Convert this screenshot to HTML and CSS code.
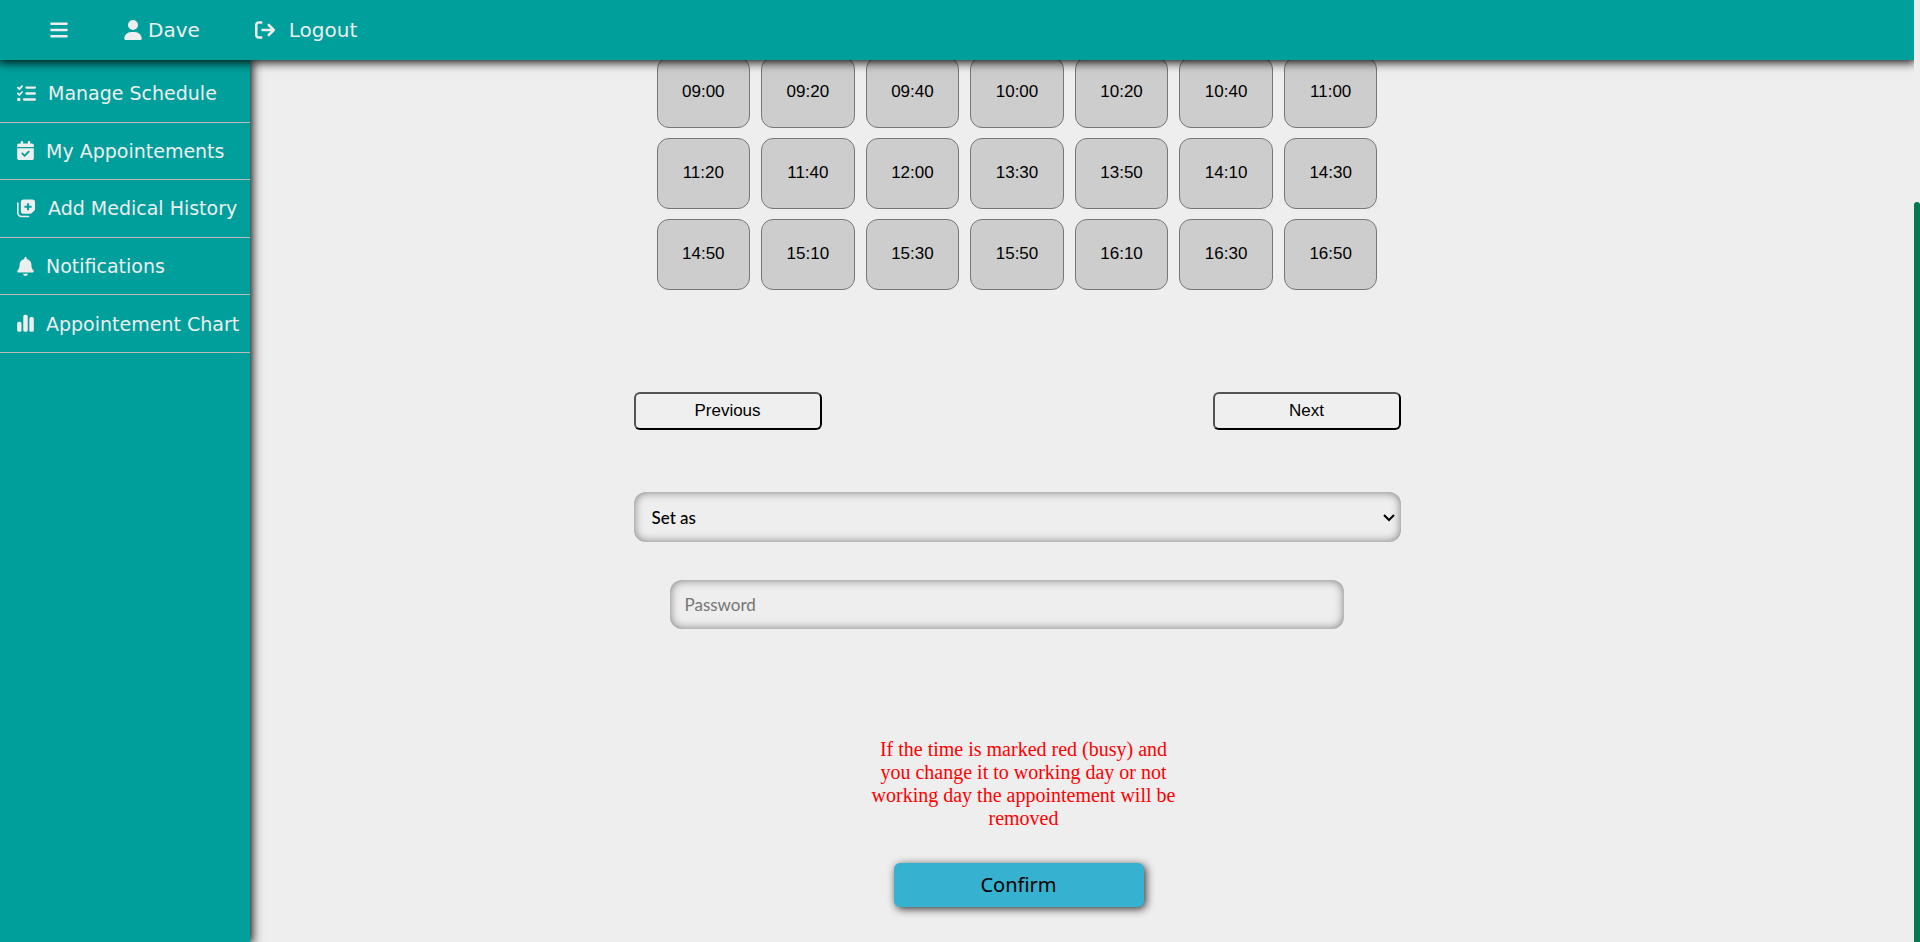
FILE: index.html
```html
<!DOCTYPE html>
<html lang="en">
<head>
<meta charset="utf-8">
<title>Manage Schedule</title>
<link rel="stylesheet" href="styles.css">
</head>
<body>
<header class="topbar">
  <button class="menu-toggle" type="button" aria-label="Toggle menu">
    <svg class="icon icon-narrow" viewBox="0 0 448 512"><path d="M0 96C0 78.300 14.300 64 32 64H416c17.700 0 32 14.300 32 32s-14.300 32-32 32H32C14.300 128 0 113.700 0 96zM0 256c0-17.700 14.300-32 32-32H416c17.700 0 32 14.300 32 32s-14.300 32-32 32H32c-17.700 0-32-14.300-32-32zM448 416c0 17.700-14.300 32-32 32H32c-17.700 0-32-14.300-32-32s14.300-32 32-32H416c17.700 0 32 14.300 32 32z"/></svg>
  </button>
  <a class="topbar-link user-link" href="#"><svg class="icon icon-narrow" viewBox="0 0 448 512"><path d="M224 256A128 128 0 1 0 224 0a128 128 0 1 0 0 256zm-45.700 48C79.800 304 0 383.800 0 482.300C0 498.700 13.300 512 29.700 512H418.300c16.400 0 29.700-13.300 29.700-29.700C448 383.800 368.200 304 269.700 304H178.300z"/></svg>Dave</a>
  <a class="topbar-link logout-link" href="#"><svg class="icon" viewBox="0 0 512 512"><path d="M502.600 278.600c12.500-12.500 12.500-32.800 0-45.300l-128-128c-12.500-12.500-32.800-12.500-45.300 0s-12.500 32.800 0 45.300L402.700 224 192 224c-17.700 0-32 14.300-32 32s14.300 32 32 32l210.700 0-73.400 73.400c-12.500 12.500-12.500 32.800 0 45.300s32.800 12.500 45.300 0l128-128zM160 96c17.700 0 32-14.300 32-32s-14.300-32-32-32L96 32C43 32 0 75 0 128L0 384c0 53 43 96 96 96l64 0c17.700 0 32-14.300 32-32s-14.300-32-32-32l-64 0c-17.700 0-32-14.300-32-32l0-256c0-17.700 14.300-32 32-32l64 0z"/></svg>Logout</a>
</header>
<div class="layout">
  <nav class="sidebar">
    <a class="side-link" href="#"><svg class="icon" viewBox="0 0 512 512"><path d="M152.100 38.200c9.900 8.900 10.700 24 1.800 33.900l-72 80c-4.400 4.900-10.600 7.800-17.200 7.900s-12.900-2.400-17.600-7L7 113C-2.300 103.600-2.300 88.400 7 79s24.600-9.400 33.900 0l22.100 22.100 55.100-61.200c8.900-9.900 24-10.700 33.900-1.800zm0 160c9.900 8.900 10.700 24 1.800 33.900l-72 80c-4.400 4.900-10.600 7.800-17.200 7.900s-12.900-2.400-17.600-7L7 273c-9.400-9.400-9.400-24.600 0-33.900s24.600-9.400 33.900 0l22.100 22.100 55.100-61.200c8.900-9.900 24-10.700 33.900-1.800zM224 96c0-17.700 14.300-32 32-32H480c17.700 0 32 14.300 32 32s-14.300 32-32 32H256c-17.700 0-32-14.300-32-32zm0 160c0-17.700 14.300-32 32-32H480c17.700 0 32 14.300 32 32s-14.300 32-32 32H256c-17.700 0-32-14.300-32-32zM160 416c0-17.700 14.300-32 32-32H480c17.700 0 32 14.300 32 32s-14.300 32-32 32H192c-17.700 0-32-14.300-32-32zM48 368a48 48 0 1 1 0 96 48 48 0 1 1 0-96z"/></svg>Manage Schedule</a>
    <a class="side-link" href="#"><svg class="icon icon-narrow" viewBox="0 0 448 512"><path d="M128 0c17.700 0 32 14.300 32 32V64H288V32c0-17.700 14.300-32 32-32s32 14.300 32 32V64h48c26.500 0 48 21.500 48 48v48H0V112C0 85.500 21.500 64 48 64H96V32c0-17.700 14.300-32 32-32zM0 192H448V464c0 26.500-21.500 48-48 48H48c-26.500 0-48-21.500-48-48V192zM329 305c9.400-9.400 9.400-24.600 0-33.900s-24.600-9.400-33.900 0l-95 95-47-47c-9.400-9.400-24.600-9.400-33.900 0s-9.400 24.600 0 33.900l64 64c9.400 9.400 24.600 9.400 33.900 0L329 305z"/></svg>My Appointements</a>
    <a class="side-link" href="#"><svg class="icon" viewBox="0 0 512 512"><path fill-rule="evenodd" d="M180 16H410a76 76 0 0 1 76 76V270C486 290 478 302 466 314L398 380C386 392 372 400 354 400H180a76 76 0 0 1-76-76V92a76 76 0 0 1 76-76zM272 112v70H202v52h70v70h52V234h70V182H324V112z"/><path d="M22 112V368a104 104 0 0 0 104 104H310" fill="none" stroke="currentColor" stroke-width="44" stroke-linecap="round"/></svg>Add Medical History</a>
    <a class="side-link" href="#"><svg class="icon icon-narrow" viewBox="0 0 448 512"><path d="M224 0c-17.700 0-32 14.300-32 32V51.200C119 66 64 130.600 64 208v18.800c0 47-17.300 92.400-48.500 127.600l-7.400 8.300c-8.400 9.400-10.400 22.900-5.300 34.400S19.400 416 32 416H416c12.600 0 24-7.400 29.200-18.900s3.100-25-5.300-34.400l-7.400-8.300C401.300 319.200 384 273.900 384 226.800V208c0-77.400-55-142-128-156.800V32c0-17.700-14.300-32-32-32zm45.300 493.300c12-12 18.700-28.300 18.700-45.300H160c0 17 6.700 33.300 18.700 45.300s28.300 18.700 45.300 18.700s33.300-6.700 45.300-18.700z"/></svg>Notifications</a>
    <a class="side-link" href="#"><svg class="icon icon-narrow" viewBox="0 0 448 512"><path d="M164 64a44 44 0 0 1 44-44h32a44 44 0 0 1 44 44V436a44 44 0 0 1-44 44H208a44 44 0 0 1-44-44zM0 256a44 44 0 0 1 44-44H72a44 44 0 0 1 44 44V436a44 44 0 0 1-44 44H44a44 44 0 0 1-44-44zM328 128a44 44 0 0 1 44-44h32a44 44 0 0 1 44 44V436a44 44 0 0 1-44 44H372a44 44 0 0 1-44-44z"/></svg>Appointement Chart</a>
  </nav>
  <main class="content">
    <form class="schedule">
      <div class="slots">
        <button class="slot" type="button">09:00</button>
        <button class="slot" type="button">09:20</button>
        <button class="slot" type="button">09:40</button>
        <button class="slot" type="button">10:00</button>
        <button class="slot" type="button">10:20</button>
        <button class="slot" type="button">10:40</button>
        <button class="slot" type="button">11:00</button>
        <button class="slot" type="button">11:20</button>
        <button class="slot" type="button">11:40</button>
        <button class="slot" type="button">12:00</button>
        <button class="slot" type="button">13:30</button>
        <button class="slot" type="button">13:50</button>
        <button class="slot" type="button">14:10</button>
        <button class="slot" type="button">14:30</button>
        <button class="slot" type="button">14:50</button>
        <button class="slot" type="button">15:10</button>
        <button class="slot" type="button">15:30</button>
        <button class="slot" type="button">15:50</button>
        <button class="slot" type="button">16:10</button>
        <button class="slot" type="button">16:30</button>
        <button class="slot" type="button">16:50</button>
      </div>
      <div class="pager">
        <button class="pager-button" type="button">Previous</button>
        <button class="pager-button" type="button">Next</button>
      </div>
      <div class="status-wrap">
        <select class="field status" aria-label="Set as">
          <option>Set as</option>
        </select>
        <svg class="chevron" viewBox="0 0 12 8"><path d="M1 1l5 5 5-5" fill="none" stroke="#000" stroke-width="2"/></svg>
      </div>
      <input class="field password" type="password" placeholder="Password" aria-label="Password">
      <p class="warning">If the time is marked red (busy) and you change it to working day or not working day the appointement will be removed</p>
      <button class="confirm" type="submit">Confirm</button>
    </form>
  </main>
</div>
<div class="scroll-track"><div class="scroll-thumb"></div></div>
</body>
</html>
```
FILE: styles.css
```css
* {
  box-sizing: border-box;
}

body {
  margin: 0;
  height: 100vh;
  display: grid;
  grid-template-columns: 1fr 6px;
  grid-template-rows: 60px 1fr;
  overflow: hidden;
  background: #eee;
}

.topbar {
  z-index: 2;
  display: flex;
  align-items: center;
  padding-left: 50px;
  background: #009f9b;
  box-shadow: 0 0 10px 2px #000;
  clip-path: inset(0 0 -20px 0);
  color: #eee;
}

.icon {
  width: 19px;
  height: 19px;
  flex: none;
  fill: currentColor;
}

.icon-narrow {
  width: 17px;
}

.menu-toggle {
  display: flex;
  padding: 0;
  border: 0;
  background: none;
  color: inherit;
}

.topbar-link,
.side-link {
  display: flex;
  align-items: center;
  font-family: Tahoma, "DejaVu Sans", sans-serif;
  color: #eee;
  text-decoration: none;
}

.topbar-link {
  font-size: 20px;
}

.side-link {
  font-size: 19px;
}

.topbar .icon {
  width: 20px;
  height: 20px;
}

.topbar .icon-narrow {
  width: 18px;
}

.user-link {
  gap: 6px;
  margin-left: 56px;
}

.logout-link {
  gap: 14px;
  margin-left: 55px;
}

.layout {
  display: grid;
  grid-template-columns: 250px 1fr;
  min-height: 0;
}

.sidebar {
  z-index: 1;
  padding-top: 5px;
  display: grid;
  grid-template-rows: repeat(5, calc(288px / 5));
  background: #009f9b;
  box-shadow: 0 0 10px 2px #000;
}

.side-link {
  gap: 12px;
  padding: 0 0 0 17px;
  border-bottom: 1px solid #bbb;
  white-space: nowrap;
}

.content {
  min-height: 0;
  padding-right: 130px;
}

.schedule {
  width: 50%;
  margin: 0 auto;
  display: flex;
  flex-direction: column;
}

.slots {
  display: grid;
  grid-template-columns: repeat(7, 1fr);
  grid-auto-rows: 71px;
  gap: 10px 11px;
  width: 94%;
  margin: -3px auto 0;
}

.slot {
  padding: 0 0 1px;
  border: 1px solid #777;
  border-radius: 12px;
  background: #cdcdcd;
  color: #000;
  font: 17px "Liberation Sans", Arial, sans-serif;
}

.pager {
  display: flex;
  justify-content: space-between;
  margin-top: 102px;
}

.pager-button {
  width: 188px;
  height: 38px;
  border: 2px outset #000;
  border-radius: 6px;
  background: #efefef;
  color: #000;
  font: 17px "Liberation Sans", Arial, sans-serif;
}

.field {
  border: 0;
  border-radius: 12px;
  background-color: #eee;
  box-shadow: inset 0 0 10px #777;
  color: #000;
  font: 17px Lato, "Open Sans", sans-serif;
}

.status-wrap {
  position: relative;
  display: grid;
  margin-top: 62px;
}

.status {
  appearance: none;
  height: 50px;
  padding: 0 32px 0 18px;
  font-weight: 500;
}

.chevron {
  position: absolute;
  right: 6px;
  top: 22px;
  width: 12px;
  height: 8px;
  pointer-events: none;
}

.password {
  width: 88%;
  height: 49px;
  margin: 38px 0 0 36px;
  padding: 0 15px;
}

.password::placeholder {
  color: #757575;
}

.warning {
  width: 310px;
  margin: 109px 0 0 235px;
  color: #f00;
  font: 20px/23px "Liberation Serif", "Times New Roman", serif;
  text-align: center;
}

.confirm {
  width: 250px;
  height: 44px;
  margin: 33px 0 0 260px;
  padding: 0 0 2px;
  border: 0;
  border-radius: 6px;
  background: #36b1cf;
  box-shadow: 2px 2px 8px #333;
  color: #000;
  font: 20px "Noto Sans", "Open Sans", sans-serif;
}

.scroll-track {
  grid-column: 2;
  grid-row: 1 / 3;
  padding-top: 202px;
}

.scroll-thumb {
  height: 100%;
  border-radius: 6px 6px 0 0;
  background: #007a4e;
}
```
